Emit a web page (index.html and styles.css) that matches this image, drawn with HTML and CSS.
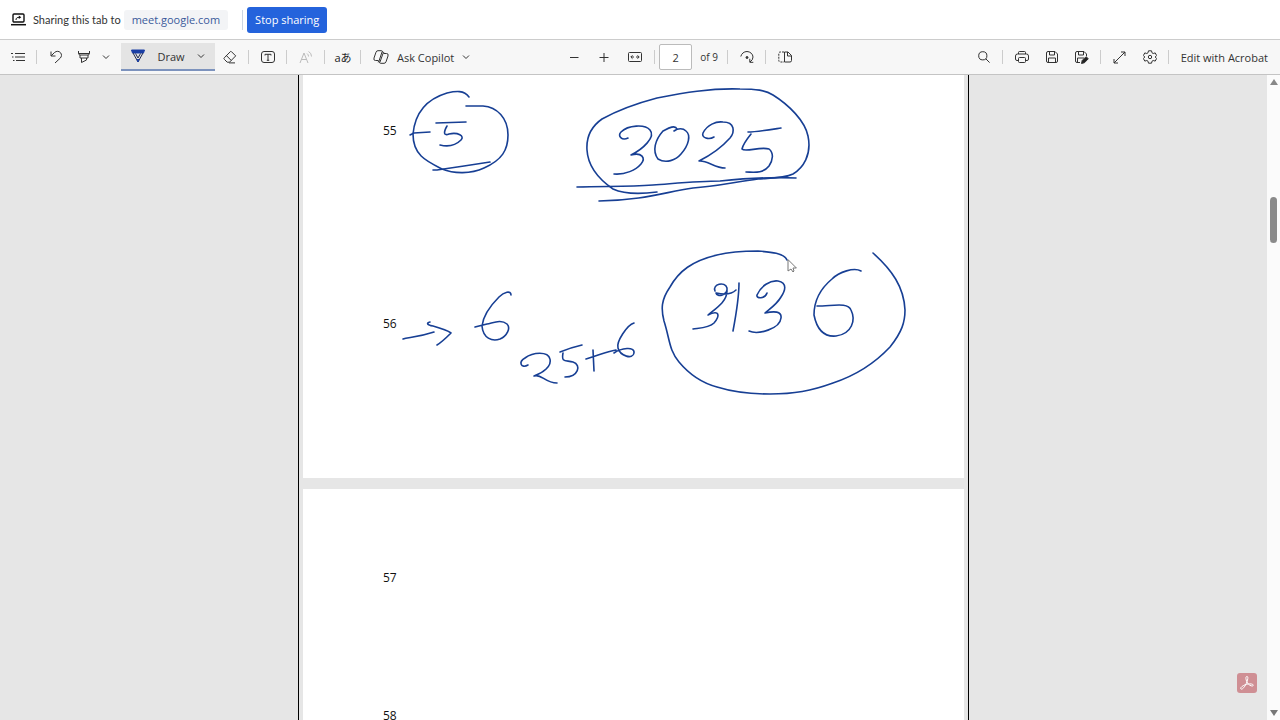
FILE: index.html
```html
<!DOCTYPE html>
<html lang="en">
<head>
    <meta charset="UTF-8">
    <meta name="viewport" content="width=device-width, initial-scale=1.0">
    <title>PDF viewer</title>
    <link rel="stylesheet" href="styles.css">
</head>
<body>
<div class="share-bar">
    <svg class="share-icon" width="15" height="13" viewBox="0 0 15 13" fill="none" stroke="#111">
        <rect x="2" y="1" width="11" height="8" rx="1" stroke-width="1.4"/>
        <path d="M0 11.7h15" stroke-width="1.5"/>
        <path d="M5 7c0-2 1-2.700 3.500-2.700"/>
        <path d="M7.800 2.500L10.300 4.300 7.800 6.100z" fill="#111" stroke="none"/>
    </svg>
    <span class="share-text">Sharing this tab to</span>
    <a href="#" class="share-link">meet.google.com</a>
    <span class="share-line"></span>
    <button type="button" class="stop">Stop sharing</button>
</div>

<div class="toolbar">
    <div class="tools">
        <button type="button" class="btn" aria-label="Table of contents">
            <svg width="14" height="12" viewBox="0 0 14 12"><path d="M4 2.500h10M4 6h10M5 9.500h9M0 2.500h2M1 6h1.500M2 9.500h1.500"/></svg>
        </button>
        <span class="sep"></span>
        <button type="button" class="btn" aria-label="Undo">
            <svg width="14" height="14" viewBox="0 0 14 14"><path d="M2 1.500v4.500h4.500M2.200 5.800L5.500 2.500C7.500.8 10 1 11.500 2.700c1.500 1.700 1.200 4-.3 5.500L6 13"/></svg>
        </button>
        <button type="button" class="btn narrow" aria-label="Highlight">
            <svg width="14" height="14" viewBox="0 0 14 14"><path d="M1.500 1v2.500l1 1.500h9l1-1.500V1M1.500 3.500h11M3 5v3h8V5M4.500 8v4.500L9.500 10V8"/></svg>
        </button>
        <button type="button" class="btn arrow" aria-label="Highlight colors">
            <svg width="8" height="6" viewBox="0 0 8 6"><path d="M1 1.500l3 3 3-3"/></svg>
        </button>
        <button type="button" class="btn draw">
            <svg width="14" height="14" viewBox="0 0 14 14"><path d="M.5 1h13l-1 3h-11z" fill="#1b3fa5" stroke="#1b3fa5"/><path d="M2 4l5 9 5-9M4.500 4.500L7 9l2.500-4.500" stroke="#222c50"/><path d="M6 10.500h2L7 13z" fill="#1b3fa5" stroke="#1b3fa5"/></svg>
            <span>Draw</span>
            <svg width="8" height="6" viewBox="0 0 8 6"><path d="M1 1.500l3 3 3-3"/></svg>
        </button>
        <button type="button" class="btn" aria-label="Erase">
            <svg width="14" height="14" viewBox="0 0 14 14"><path d="M8.300 1.500L12.700 5.900 6.500 12.200H4.200L1.300 9.300c-.5-.5-.5-1 0-1.500L7.500 1.500q.4-.4.8 0zM3.500 5.700l4.700 4.700M6 12.900h6"/></svg>
        </button>
        <span class="sep"></span>
        <button type="button" class="btn" aria-label="Add text">
            <svg width="14" height="14" viewBox="0 0 14 14"><rect x=".5" y="1.500" width="13" height="11" rx="2.500"/><path d="M4 5.500V4.300h6v1.200M7 4.300v6M5.800 10.300h2.400"/></svg>
        </button>
        <span class="sep"></span>
        <button type="button" class="btn off" aria-label="Read aloud">
            <svg width="14" height="14" viewBox="0 0 14 14"><path d="M1 13L5 3l4 10M2.500 9.500h5M8 3.500q1.500 1 1.500 3M9.500 1.500q3 1.500 3 5"/></svg>
        </button>
        <span class="sep"></span>
        <button type="button" class="btn translate" aria-label="Translate">aあ</button>
        <span class="sep"></span>
        <button type="button" class="btn copilot">
            <svg width="16" height="14" viewBox="0 0 16 14"><path d="M10.500 3.500L9.800 1.800Q9.400.7 8.300.7H5Q3.500.7 3 2.200L1 8q-.8 2.500 1.500 2.500H5M5.500 10.500l.7 1.700q.4 1.100 1.500 1.100H11q1.500 0 2-1.500L15 6q.8-2.500-1.500-2.500H11M9.200 1.500L6 11q-.3 1-1.200 1M6.800 12.500L10 3.500q.3-1 1.200-1"/></svg>
            <span>Ask Copilot</span>
            <svg width="8" height="6" viewBox="0 0 8 6"><path d="M1 1.500l3 3 3-3"/></svg>
        </button>
    </div>

    <div class="tools pager">
        <button type="button" class="btn" aria-label="Zoom out">
            <svg width="10" height="10" viewBox="0 0 10 10"><path d="M1 5.500h8.500"/></svg>
        </button>
        <button type="button" class="btn" aria-label="Zoom in">
            <svg width="10" height="10" viewBox="0 0 10 10"><path d="M.5 5.500h9M5 1v9"/></svg>
        </button>
        <button type="button" class="btn fit" aria-label="Fit to width">
            <svg width="14" height="12" viewBox="0 0 14 12"><rect x=".5" y="1.500" width="13" height="9" rx="1"/><path d="M3 6h3M8 6h3M4.500 4.300L2.800 6l1.700 1.700M9.500 4.300L11.200 6 9.500 7.700"/></svg>
        </button>
        <span class="sep"></span>
        <input type="text" class="page-no" value="2" aria-label="Page number">
        <span class="page-count">of 9</span>
        <span class="sep"></span>
        <button type="button" class="btn" aria-label="Rotate">
            <svg width="14" height="14" viewBox="0 0 14 14"><path d="M.8 6.500C1.500 3.500 4 1.500 7 1.500s6 2.500 6 5.500q0 3-3 5M9.800 8.800v3.500h3.500"/><circle cx="7" cy="7.500" r="1" fill="#333"/></svg>
        </button>
        <span class="sep"></span>
        <button type="button" class="btn" aria-label="Page view">
            <svg width="14" height="12" viewBox="0 0 14 12"><path d="M6 1H2.500Q.8 1 .8 2.500v7Q.8 11 2.500 11H6" stroke-dasharray="2 1"/><path d="M6.500 1H10l3.500 3.500v5Q13.500 11 12 11H6.500zM9.500 1v4h4"/></svg>
        </button>
    </div>

    <div class="tools right">
        <button type="button" class="btn" aria-label="Find">
            <svg width="12" height="12" viewBox="0 0 12 12"><circle cx="4.800" cy="4.800" r="4.100"/><path d="M7.800 7.800l3.800 3.800"/></svg>
        </button>
        <span class="sep"></span>
        <button type="button" class="btn" aria-label="Print">
            <svg width="14" height="12" viewBox="0 0 14 12"><path d="M3.500 3V1.500q0-1 1-1h5q1 0 1 1V3M3.500 9.500H2Q.5 9.500.5 8V5Q.5 3 2.500 3h9q2 0 2 2v3q0 1.500-1.500 1.500h-1.500"/><rect x="3.500" y="6.500" width="7" height="5" rx="1"/></svg>
        </button>
        <button type="button" class="btn" aria-label="Save">
            <svg width="12" height="12" viewBox="0 0 12 12"><path d="M2 .5h7L11.500 3v7q0 1.500-1.500 1.500H2Q.5 11.500.5 10V2Q.5.500 2 .5zM3.500.5V4h5V.5M2.500 11.500V7h7v4.500"/></svg>
        </button>
        <button type="button" class="btn" aria-label="Save as">
            <svg width="14" height="13" viewBox="0 0 14 13"><path d="M5 11.500H2Q.5 11.500.5 10V2Q.5.500 2 .5h7L11.500 3v2M3.500.5V4h5V.5M2.500 11.500V7H9"/><path d="M6.500 12.500l.7-3L11 5.700l2.300 2L9.500 11.700z" fill="#222"/></svg>
        </button>
        <span class="sep"></span>
        <button type="button" class="btn" aria-label="Full screen">
            <svg width="13" height="13" viewBox="0 0 13 13"><path d="M1 12L12 1M8 1h4v4M1 8v4h4"/></svg>
        </button>
        <button type="button" class="btn" aria-label="Settings">
            <svg width="14" height="14" viewBox="0 0 14 14"><path d="M5.500.8h3l.5 2 1.200.7 2-.6L13.600 5.500 12.200 7l1.400 1.500-1.400 2.600-2-.6-1.200.7-.5 2h-3l-.5-2-1.200-.7-2 .6L.4 8.500 1.800 7 .4 5.500 1.800 2.900l2 .6L5 2.800z" stroke-linejoin="round"/><circle cx="7" cy="7" r="1.700"/></svg>
        </button>
        <span class="sep"></span>
        <button type="button" class="btn acrobat">Edit with Acrobat</button>
    </div>
</div>

<div class="viewer">
    <div class="canvas">
        <div class="document">
            <div class="page first">
                <p>55</p>
                <p>56</p>
                <svg class="ink" viewBox="303 75 661 403">
                    <path d="M469 97C464 90 456 91 447 93C427 99 415 113 413 134C413 155 426 161 442 169C454 174 471 174 484 168C502 160 508 150 508 135C508 118 497 107 483 106L466 106"/>
                    <path d="M410 135L414 133L430 132M436 123L466 122M447 126C443 133 444 136 449 134C458 132 465 136 461 140C456 145 448 147 440 145M433 170L437 170L464 166L490 162"/>
                    <path d="M657 192C642 194 624 194 613 189C600 180 588 168 587 150C586 135 592 126 602 119C620 109 638 103 657 98C683 93 710 88 740 89C756 89 765 90 773 95C789 105 805 121 808 136C812 155 803 168 793 174C785 178 774 178 758 179C735 182 714 187 693 188C665 192 645 200 599 201"/>
                    <path d="M577 187C605 186 627 187 653 185C680 183 700 181 720 181C750 178 775 177 796 178"/>
                    <path d="M628 138C622 141 617 136 621 132C628 125 645 124 650 130C656 137 643 149 631 155C642 152 646 158 641 164C636 170 625 175 614 174"/>
                    <path d="M677 129C675 124 667 129 663 131C655 140 652 151 658 159C666 164 676 160 681 154C689 145 691 135 686 131C683 128 678 128 674 131"/>
                    <path d="M714 137C709 140 701 138 703 133C707 125 716 121 723 122C735 122 735 132 730 138C722 147 709 156 699 161C707 160 715 168 725 168"/>
                    <path d="M781 128C768 130 756 132 748 132M751 134C747 139 743 144 742 149C745 153 760 146 769 149C774 153 773 160 769 166C763 174 753 172 746 172"/>
                    <path d="M403 339C408 337 416 338 434 332M430 322C426 323 427 325 433 326C440 328 447 330 451 333C446 338 442 342 437 345"/>
                    <path d="M511 295C511 290 504 292 499 297C489 307 483 317 482 326C483 338 492 342 500 339C507 336 511 328 507 324C501 319 493 323 487 324L475 327"/>
                    <path d="M528 365C521 369 518 362 525 358C533 352 548 351 550 359C552 366 543 373 534 376C541 373 545 383 557 383"/>
                    <path d="M582 345C573 347 565 350 560 352M563 353C561 363 566 360 573 362C582 365 578 377 565 377"/>
                    <path d="M586 359C600 355 605 352 616 350M593 350L594 371M634 323C627 325 616 342 618 348C620 356 633 360 634 353C635 346 621 348 614 353"/>
                    <path d="M787 260C784 253 771 252 758 251C744 251 729 252 717 255C692 261 679 271 670 287C661 300 661 309 664 321C670 340 669 350 679 362C689 374 702 383 717 387C733 392 751 394 770 394C794 394 811 391 833 383C857 375 875 363 890 347C902 332 905 322 905 310C904 287 892 270 873 253"/>
                    <path d="M715 291C712 284 725 281 727 288C728 295 717 298 716 293C721 294 730 296 736 290M727 291C727 302 715 309 708 315C720 309 720 316 714 323C709 328 700 328 693 329M739 283C739 299 736 315 733 331"/>
                    <path d="M767 293C765 299 756 299 757 295C761 286 770 280 778 281C788 283 785 291 781 297C777 304 771 308 765 313C774 311 782 311 781 318C780 329 758 335 749 331"/>
                    <path d="M861 271C854 267 839 272 832 279C820 289 814 302 814 315C817 330 825 337 836 336C852 334 856 320 851 310C848 302 833 306 817 306"/>
                    <path class="cursor" d="M788 260v11l3-2 2 3 1-1-1-3h3z"/>
                </svg>
            </div>
            <div class="page second">
                <p>57</p>
                <p>58</p>
            </div>
        </div>
        <button type="button" class="badge" aria-label="Adobe Acrobat">
            <svg width="16" height="16" viewBox="0 0 16 16" fill="none" stroke="#fff"><path d="M8 1.500C6 1.500 7 5.500 8.500 8s5.500 4 5.800 2.300C14.500 8.500 9 8.500 6 9.800S.8 13 2 14s4-2.500 5.200-5.300S9.800 1.500 8 1.500z"/></svg>
        </button>
    </div>
    <div class="scrollbar">
        <span class="up"></span>
        <span class="thumb"></span>
        <span class="down"></span>
    </div>
</div>
</body>
</html>
```
FILE: styles.css
```css
* {
    box-sizing: border-box;
}

body {
    margin: 0;
    height: 100vh;
    display: flex;
    flex-direction: column;
    overflow: hidden;
    background-color: #fff;
    color: #333;
    font-family: "Open Sans", "Noto Sans", "Noto Sans CJK JP", sans-serif;
    font-size: 11px;
}

button {
    font: inherit;
    color: inherit;
    border: none;
    cursor: pointer;
}

svg {
    display: block;
    flex-shrink: 0;
}

/* sharing notice */
.share-bar {
    height: 40px;
    flex-shrink: 0;
    display: flex;
    align-items: center;
    padding-left: 11px;
    border-bottom: 1px solid #ccc;
    white-space: nowrap;
}

.share-text {
    margin: 0 3px 0 7px;
    font-family: Lato, "Open Sans", sans-serif;
}

.share-link {
    padding: 0 8px;
    line-height: 20px;
    border-radius: 3px;
    background-color: #f3f4f6;
    color: #3a5a9b;
    text-decoration: none;
}

.share-line {
    width: 1px;
    height: 20px;
    margin: 0 4px 0 14px;
    background-color: #ccd6e2;
}

.stop {
    height: 26px;
    padding: 0 8px;
    border-radius: 3px;
    background-color: #2463dc;
    color: #fff;
}

/* toolbar */
.toolbar {
    height: 35px;
    flex-shrink: 0;
    display: flex;
    padding: 0 4px 0 3px;
    background-color: #f7f7f7;
    border-bottom: 1px solid #c4c4c4;
    white-space: nowrap;
}

.tools {
    display: flex;
    align-items: center;
}

.btn {
    width: 30px;
    height: 28px;
    padding: 0;
    display: flex;
    align-items: center;
    justify-content: center;
    background: none;
}

.btn svg {
    fill: none;
    stroke: #333;
}

.narrow {
    width: 26px;
}

.arrow {
    width: 18px;
}

.sep {
    width: 1px;
    height: 14px;
    margin: 0 4px 0 3px;
    background-color: #ccc;
}

.draw {
    width: 94px;
    margin-left: 6px;
    gap: 12px;
    background-color: #e4e4e4;
    border-bottom: 2px solid #7d93bd;
}

.off svg {
    stroke: #bbb;
}

.translate {
    width: 28px;
    color: #222;
}

.copilot {
    width: auto;
    padding: 0 6px 0 8px;
    gap: 8px;
}

.pager {
    margin-left: 83px;
}

.fit {
    width: 32px;
}

.page-no {
    width: 33px;
    height: 26px;
    padding: 0;
    border: 1px solid #bbb;
    border-radius: 2px;
    background-color: #fff;
    color: #333;
    font: inherit;
    text-align: center;
}

.page-count {
    margin: 0 6px 0 8px;
    font-size: 10px;
}

.right {
    margin-left: auto;
}

.acrobat {
    width: auto;
    padding: 0 8px;
}

/* pages */
.viewer {
    flex: 1;
    min-height: 0;
    display: flex;
}

.canvas {
    flex: 1;
    position: relative;
    overflow: hidden;
    background-color: #e6e6e6;
}

.document {
    width: 671px;
    max-width: 100%;
    margin: 0 auto;
    padding: 0 4px;
    display: flex;
    flex-direction: column;
    gap: 11px;
    border-left: 1px solid #000;
    border-right: 1px solid #000;
}

.page {
    position: relative;
    padding-left: 80px;
    background-color: #fff;
    color: #111;
    font-size: 12px;
    line-height: 20px;
}

.page p {
    margin: 0;
}

.first {
    padding-top: 46px;
    padding-bottom: 144px;
}

.first p + p {
    margin-top: 173px;
}

.second {
    padding-top: 79px;
    padding-bottom: 144px;
}

.second p + p {
    margin-top: 118px;
}

.ink {
    position: absolute;
    left: 0;
    top: 0;
    width: 100%;
    height: 100%;
    fill: none;
    stroke: #173f94;
    stroke-width: 1.6;
    stroke-linecap: round;
    stroke-linejoin: round;
}

.ink .cursor {
    fill: #fff;
    stroke: #777;
    stroke-width: 1;
}

.badge {
    position: absolute;
    right: 10px;
    bottom: 27px;
    width: 20px;
    height: 20px;
    padding: 2px;
    border-radius: 3px;
    background-color: #cf8f94;
}

.scrollbar {
    width: 13px;
    display: flex;
    flex-direction: column;
    align-items: center;
    padding: 4px 0;
    background-color: #fbfbfb;
}

.up,
.down {
    border-left: 4px solid transparent;
    border-right: 4px solid transparent;
}

.up {
    border-bottom: 6px solid #888;
}

.down {
    margin-top: auto;
    border-top: 6px solid #777;
}

.thumb {
    width: 7px;
    height: 46px;
    margin-top: 112px;
    border-radius: 4px;
    background-color: #8a8a8a;
}
```
